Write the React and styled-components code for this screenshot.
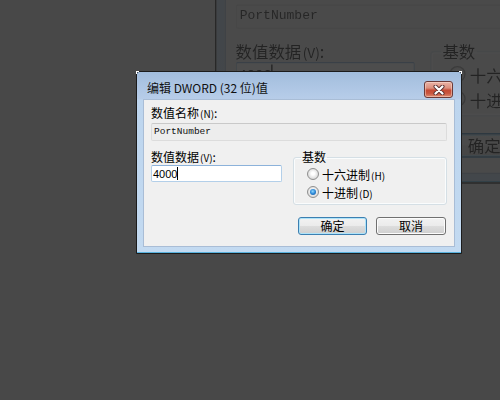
import React from 'react';
import styled, { createGlobalStyle, css } from 'styled-components';

const GlobalStyle = createGlobalStyle`
    html, body {
        margin: 0;
        padding: 0;
        background: #484848;
        overflow: hidden;
    }
`;

const Dialog = () => {
    return (
        <Window>
            <TitleBar>
                <Title>编辑 DWORD (32 位)值</Title>
                <CloseButton>
                    <svg width="12" height="10" viewBox="0 0 12 10">
                        <path d="M2.5 1.5 L9.5 8.5 M9.5 1.5 L2.5 8.5" stroke="#5a3030" strokeWidth="4" strokeLinecap="round" />
                        <path d="M2.5 1.5 L9.5 8.5 M9.5 1.5 L2.5 8.5" stroke="#ffffff" strokeWidth="2.2" strokeLinecap="round" />
                    </svg>
                </CloseButton>
            </TitleBar>
            <Client>
                <Label>数值名称<Key>(N)</Key>:</Label>
                <NameField>PortNumber</NameField>
                <Lower>
                    <div>
                        <Label>数值数据<Key>(V)</Key>:</Label>
                        <Input>4000<Caret /></Input>
                    </div>
                    <Group>
                        <Legend>基数</Legend>
                        <RadioRow>
                            <Radio />
                            <span>十六进制<Key>(H)</Key></span>
                        </RadioRow>
                        <RadioRow>
                            <Radio $checked />
                            <span>十进制<Key>(D)</Key></span>
                        </RadioRow>
                    </Group>
                </Lower>
                <ButtonRow>
                    <Button $default $width={69}>确定</Button>
                    <Button $width={70}>取消</Button>
                </ButtonRow>
            </Client>
        </Window>
    );
};

const App = () => {
    return (
        <Desktop>
            <GlobalStyle />
            {/* enlarged, dimmed copy of the dialog behind the real one */}
            <GhostLayer>
                <Dialog />
            </GhostLayer>
            <MainLayer>
                <Dialog />
            </MainLayer>
        </Desktop>
    );
};

export default App;

const Desktop = styled.div`
    position: relative;
    width: 500px;
    height: 400px;
    overflow: hidden;
    background: #484848;
`;

const GhostLayer = styled.div`
    position: absolute;
    left: 215px;
    top: -67px;
    transform: scale(1.37);
    transform-origin: 0 0;
    filter: contrast(0.37) brightness(0.44) blur(0.5px);
`;

const MainLayer = styled.div`
    position: absolute;
    left: 136px;
    top: 71px;
`;

const Window = styled.div`
    position: relative;
    width: 326px;
    box-sizing: border-box;
    border: 1px solid #1c1c1c;
    border-radius: 3px 3px 0 0;
    padding: 0 6px 6px;
    background: linear-gradient(to bottom, #a2bddd 0px, #b7cde9 27px, #bdd5ee 28px, #c3daf1 100%);
    box-shadow: inset 0 -1px 0 #58b2de;
    font-family: "Noto Sans CJK SC", "Noto Sans", sans-serif;
    color: #000;

    &::before, &::after {
        content: "";
        position: absolute;
        top: -1px;
        width: 2px;
        height: 2px;
        border-top: 1px solid #fff;
    }
    &::before {
        left: -1px;
        border-left: 1px solid #fff;
    }
    &::after {
        right: -1px;
        border-right: 1px solid #fff;
    }
`;

const TitleBar = styled.div`
    display: flex;
    justify-content: space-between;
    align-items: flex-start;
    height: 27px;
`;

const Title = styled.span`
    margin: 8px 0 0 4px;
    font-size: 12px;
    line-height: 16px;
    color: #111;
`;

const CloseButton = styled.div`
    display: flex;
    align-items: center;
    justify-content: center;
    width: 29px;
    height: 17px;
    box-sizing: border-box;
    margin: 9px 2px 0 0;
    border: 1px solid #6b3a38;
    border-radius: 3px;
    background: linear-gradient(to bottom, #eab3a6 0%, #dc907e 40%, #c54a34 55%, #c9553e 75%, #dc8a70 100%);
    box-shadow: inset 0 0 0 1px rgba(255, 230, 220, 0.45);
`;

const Client = styled.div`
    height: 148px;
    box-sizing: border-box;
    border: 1px solid #a9bdd6;
    background: #f0f0f0;
    padding: 6px 7px 0;
`;

const Label = styled.div`
    font-size: 12px;
    line-height: 14px;
    height: 14px;
    white-space: nowrap;
`;

const Key = styled.span`
    font-size: 10px;
    margin-left: 1px;
`;

const NameField = styled.div`
    margin-top: 3px;
    height: 18px;
    box-sizing: border-box;
    border: 1px solid #dcdcdc;
    border-top-color: #c9c9c9;
    border-radius: 2px;
    background: #ededed;
    padding-left: 2px;
    font-family: "Liberation Mono", monospace;
    font-size: 9.5px;
    line-height: 16px;
    color: #111;
`;

const Lower = styled.div`
    display: grid;
    grid-template-columns: 131px 154px;
    column-gap: 11px;
    align-items: start;
    margin-top: 9px;
`;

const Input = styled.div`
    display: flex;
    align-items: center;
    margin-top: 1px;
    height: 17px;
    box-sizing: border-box;
    border: 1px solid #b3cfe9;
    border-top-color: #8cb2da;
    border-radius: 2px;
    background: #fff;
    padding-left: 1px;
    font-family: "Liberation Sans", sans-serif;
    font-size: 11px;
    color: #000;
`;

const Caret = styled.span`
    width: 1px;
    height: 13px;
    background: #000;
`;

const Group = styled.fieldset`
    margin: 0;
    min-width: 0;
    padding: 1px 0 3px 13px;
    border: 1px solid #d5dfe5;
    border-radius: 3px;
    box-shadow: inset 0 0 0 1px #fafcfd;
`;

const Legend = styled.legend`
    margin-left: -6px;
    padding: 0 1px;
    font-size: 12px;
    line-height: 14px;
`;

const RadioRow = styled.div`
    display: flex;
    align-items: center;
    gap: 3px;
    height: 18px;
    font-size: 12px;
    white-space: nowrap;
`;

const Radio = styled.span`
    display: flex;
    align-items: center;
    justify-content: center;
    width: 12px;
    height: 12px;
    box-sizing: border-box;
    border-radius: 50%;
    border: 1px solid #8f8f8f;
    background: radial-gradient(circle at 50% 45%, #ffffff 20%, #e2e2e2 60%, #c8c8c8 100%);

    ${({ $checked }) => $checked && css`
        &::after {
            content: "";
            width: 6px;
            height: 6px;
            border-radius: 50%;
            background: radial-gradient(circle at 45% 40%, #8fd8ff 0%, #2a86d6 50%, #134a8a 100%);
        }
    `}
`;

const ButtonRow = styled.div`
    display: flex;
    justify-content: flex-end;
    gap: 9px;
    margin: 12px 1px 0 0;
`;

const Button = styled.div`
    display: flex;
    align-items: center;
    justify-content: center;
    width: ${({ $width }) => $width}px;
    height: 18px;
    box-sizing: border-box;
    border: 1px solid ${({ $default }) => ($default ? '#3c7fb1' : '#707070')};
    border-radius: 3px;
    background: linear-gradient(to bottom, #f2f2f2 0%, #ebebeb 50%, #dddddd 51%, #cfcfcf 100%);
    box-shadow: inset 0 0 0 1px ${({ $default }) => ($default ? '#aee3f9' : '#fcfcfc')};
    font-size: 12px;
    line-height: 14px;
`;
